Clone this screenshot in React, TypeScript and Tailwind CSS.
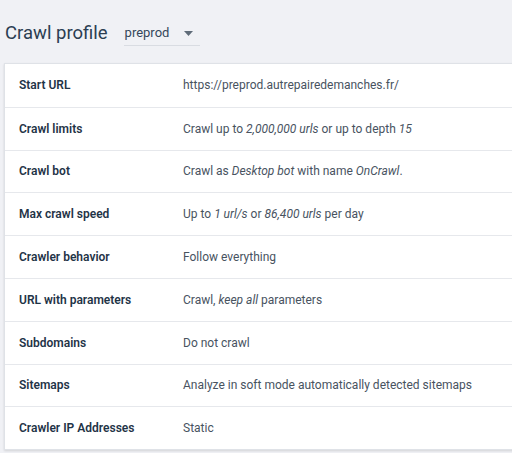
type Row = { label: string; value: React.ReactNode };

const rows: Row[] = [
  { label: 'Start URL', value: 'https://preprod.autrepairedemanches.fr/' },
  {
    label: 'Crawl limits',
    value: (
      <>
        Crawl up to <em>2,000,000 urls</em> or up to depth <em>15</em>
      </>
    ),
  },
  {
    label: 'Crawl bot',
    value: (
      <>
        Crawl as <em>Desktop bot</em> with name <em>OnCrawl</em>.
      </>
    ),
  },
  {
    label: 'Max crawl speed',
    value: (
      <>
        Up to <em>1 url/s</em> or <em>86,400 urls</em> per day
      </>
    ),
  },
  { label: 'Crawler behavior', value: 'Follow everything' },
  {
    label: 'URL with parameters',
    value: (
      <>
        Crawl, <em>keep all</em> parameters
      </>
    ),
  },
  { label: 'Subdomains', value: 'Do not crawl' },
  { label: 'Sitemaps', value: 'Analyze in soft mode automatically detected sitemaps' },
  { label: 'Crawler IP Addresses', value: 'Static' },
];

export default function App() {
  return (
    <div
      className="w-[512px] h-[453px] overflow-hidden bg-[#f0f1f5]"
      style={{ fontFamily: 'Roboto, "Liberation Sans", sans-serif' }}
    >
      <div className="flex items-start pl-[5px] pt-[20px] h-[63px]">
        <h1 className="text-[18.5px] leading-[26px] text-[#2b3e52]">Crawl profile</h1>
        <div className="ml-[16px] mt-[1px] w-[76px] h-[25px] border-b border-[#d9dce2] flex items-center justify-between pl-[1px] pr-[7px]">
          <span className="text-[13px] text-[#34475b]">preprod</span>
          <svg width="9" height="5" viewBox="0 0 9 5">
            <path d="M0 0h9L4.5 5z" fill="#5f6b78" />
          </svg>
        </div>
      </div>
      <div className="ml-[4px] w-[530px] bg-white border border-[#dfe2e7] shadow-[0_1px_2px_rgba(0,0,0,0.12)]">
        {rows.map((row, i) => (
          <div
            key={row.label}
            className={`flex items-center h-[42.8px] ${i > 0 ? 'border-t border-[#e6e8ec]' : ''}`}
          >
            <div className="w-[178px] pl-[14px] text-[12px] font-semibold text-[#1f3447]">
              {row.label}
            </div>
            <div className="text-[12px] text-[#48535f]">{row.value}</div>
          </div>
        ))}
      </div>
    </div>
  );
}
